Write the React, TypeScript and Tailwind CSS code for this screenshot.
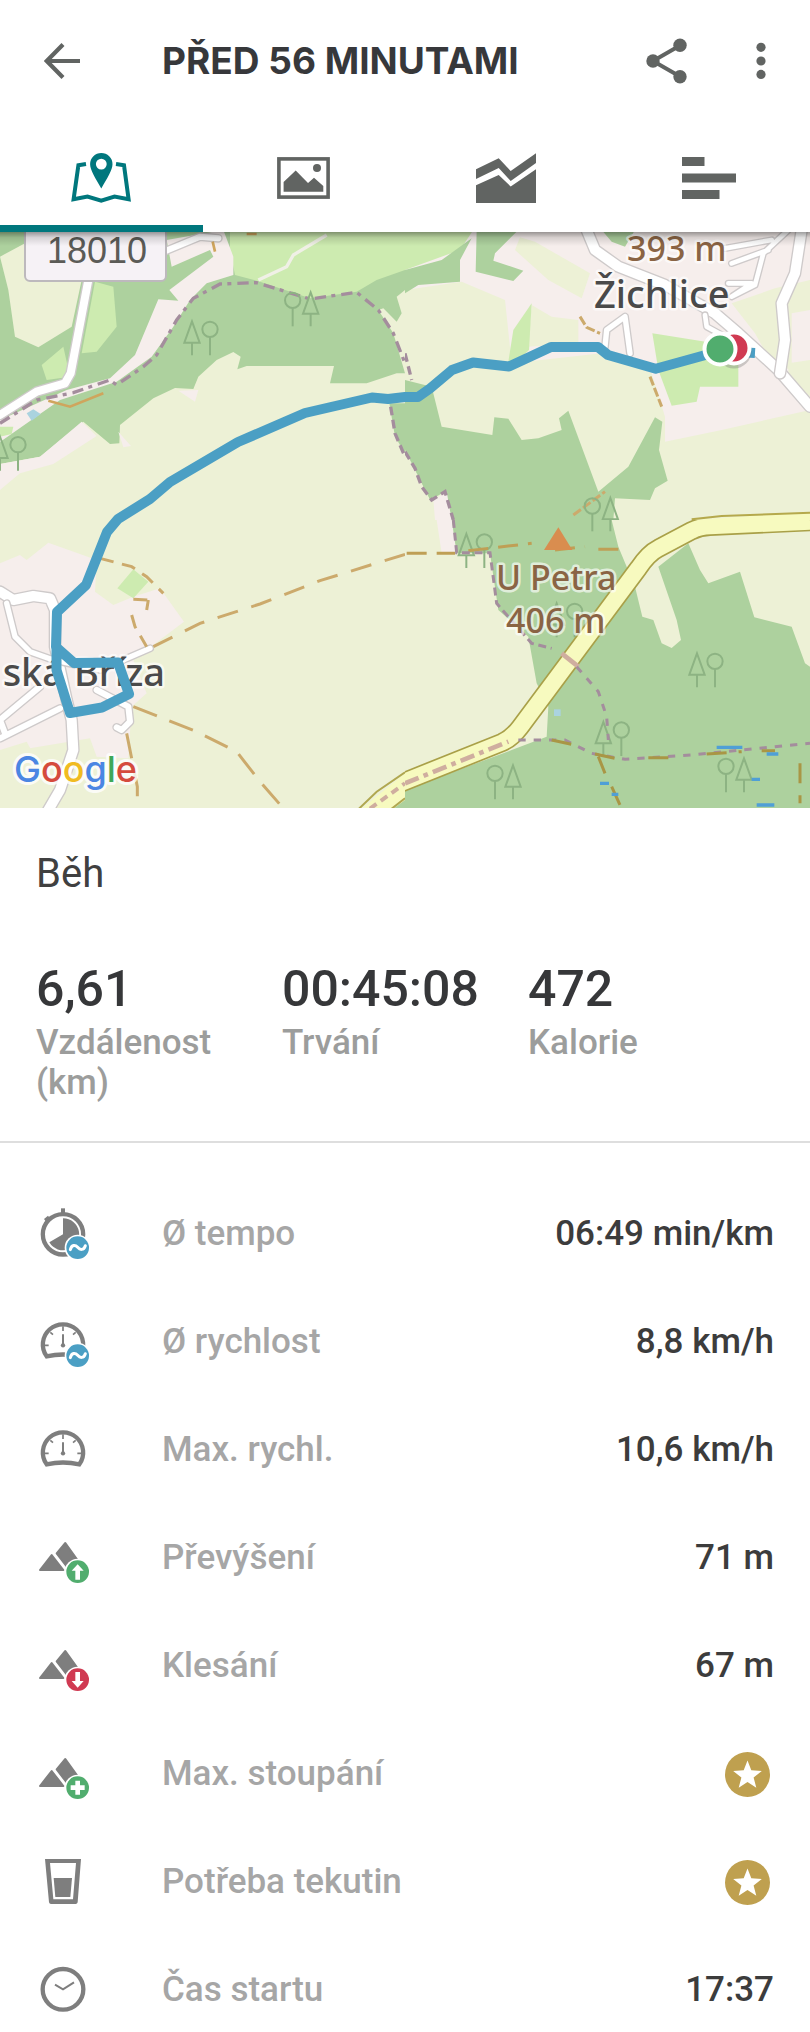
import { useState, type ReactNode } from 'react'

const GRAY = '#7e7e7e'
const BLUE = '#4b9fc4'
const GREEN = '#51ad6e'
const RED = '#d03a52'

const FOREST = '#add19e'
const MEADOW = '#cdebb0'
const FARM = '#edf1d6'
const TOWN = '#f6eeec'
const TRACK = '#ccaa6c'
const BORDER = '#a48d9d'

/* ---------- header and tab icons ---------- */

function BackIcon() {
  return (
    <svg width="36" height="36" viewBox="0 0 36 36" fill="none" stroke="#616462" strokeWidth="4.2">
      <path d="M36 18H3M19 1.5L2.8 18L19 34.5" />
    </svg>
  )
}

function ShareIcon() {
  return (
    <svg width="42" height="46" viewBox="0 0 42 46" fill="#616462">
      <path d="M34 7.5L7 23L34 38.5" fill="none" stroke="#616462" strokeWidth="4" />
      <circle cx="7" cy="23" r="6.7" />
      <circle cx="34" cy="7.2" r="6.7" />
      <circle cx="34" cy="38.7" r="6.7" />
    </svg>
  )
}

function MoreIcon() {
  return (
    <svg width="10" height="38" viewBox="0 0 10 38" fill="#616462">
      <circle cx="5" cy="5.3" r="4.6" />
      <circle cx="5" cy="19" r="4.6" />
      <circle cx="5" cy="32.4" r="4.6" />
    </svg>
  )
}

function MapIcon() {
  return (
    <svg width="60" height="50" viewBox="0 0 60 50">
      <path
        d="M15 11L7.4 12.2L2.6 46.2L16.5 43.6L30.2 47.6L43.5 43.6L57.6 46.2L53 12.2L45 11"
        fill="none"
        stroke="currentColor"
        strokeWidth="4"
      />
      <path
        d="M30.3 0A11.2 11.2 0 0 1 41.5 11.2C41.5 17 36 25.5 30.3 35.5C24.6 25.5 19.1 17 19.1 11.2A11.2 11.2 0 0 1 30.3 0ZM30.3 5.7A5.4 5.4 0 1 0 30.3 16.5A5.4 5.4 0 0 0 30.3 5.7Z"
        fill="currentColor"
        fillRule="evenodd"
      />
    </svg>
  )
}

function PhotoIcon() {
  return (
    <svg width="53" height="42" viewBox="0 0 53 42" fill="currentColor">
      <rect x="1.9" y="1.9" width="49.2" height="38.2" fill="none" stroke="currentColor" strokeWidth="3.6" />
      <path d="M6.6 25L18.7 13.5L31 26L37 20.8L46.3 29V34.8H6.6Z" />
      <circle cx="40" cy="11" r="4" />
    </svg>
  )
}

function ChartIcon() {
  return (
    <svg width="60" height="50" viewBox="0 0 60 50" fill="currentColor">
      <path d="M0 16.3L22.7 5.3L34.7 18L60 0.3V10L34.7 28L22.7 15L0 26Z" />
      <path d="M0 32.3L22.7 22L34.7 33.5L60 16.3V50H0Z" />
    </svg>
  )
}

function SplitsIcon() {
  return (
    <svg width="54" height="42" viewBox="0 0 54 42" fill="currentColor">
      <rect width="22.5" height="9" />
      <rect y="16.5" width="54" height="9" />
      <rect y="33" width="37.5" height="9" />
    </svg>
  )
}

/* ---------- row icons, all on the same 162 unit grid ---------- */

function RowIcon({ children }: { children: ReactNode }) {
  return (
    <svg width="54" height="54" viewBox="0 0 162 162" fill={GRAY} aria-hidden="true">
      {children}
    </svg>
  )
}

function Badge({ color, children }: { color: string; children: ReactNode }) {
  return (
    <>
      <circle cx="125" cy="122" r="39" fill="#fff" />
      <circle cx="125" cy="122" r="34" fill={color} />
      {children}
    </>
  )
}

function AverageBadge() {
  return (
    <Badge color={BLUE}>
      <path
        d="M103 128C107 112 118 113 125 121S143 131 148 116"
        fill="none"
        stroke="#fff"
        strokeWidth="9"
        strokeLinecap="round"
      />
    </Badge>
  )
}

function Gauge() {
  return (
    <g fill="none" stroke={GRAY}>
      <path d="M32 124A60.5 60.5 0 1 1 130 124Q81 113 32 124Z" strokeWidth="13" />
      <path d="M81 34V48M26 91H38M124 91H136M43 52L51 59M119 52L111 59" strokeWidth="5" />
      <path d="M81 60V88" strokeWidth="6" strokeLinecap="round" />
      <circle cx="81" cy="91" r="6.5" fill={GRAY} stroke="none" />
    </g>
  )
}

function Mountains() {
  return (
    <g stroke={GRAY} strokeWidth="6" strokeLinejoin="round">
      <path d="M12 117L47 72L82 117Z" />
      <path d="M88 36L62 67L100 117H146Z" />
    </g>
  )
}

function StopwatchIcon() {
  return (
    <RowIcon>
      <circle cx="81" cy="82" r="60.5" fill="none" stroke={GRAY} strokeWidth="13" />
      <rect x="75" y="4" width="12" height="14" />
      <path d="M24 36L36 26L42 34L30 44Z" />
      <path d="M81 82V34A48 48 0 1 1 40 106Z" />
      <AverageBadge />
    </RowIcon>
  )
}

function AvgSpeedIcon() {
  return (
    <RowIcon>
      <Gauge />
      <AverageBadge />
    </RowIcon>
  )
}

function MaxSpeedIcon() {
  return (
    <RowIcon>
      <Gauge />
    </RowIcon>
  )
}

function AscentIcon() {
  return (
    <RowIcon>
      <Mountains />
      <Badge color={GREEN}>
        <path d="M125 100L143 119H132V146H118V119H107Z" fill="#fff" />
      </Badge>
    </RowIcon>
  )
}

function DescentIcon() {
  return (
    <RowIcon>
      <Mountains />
      <Badge color={RED}>
        <path d="M125 146L143 126H132V99H118V126H107Z" fill="#fff" />
      </Badge>
    </RowIcon>
  )
}

function ClimbIcon() {
  return (
    <RowIcon>
      <Mountains />
      <Badge color={GREEN}>
        <path d="M118 101H132V115H146V129H132V143H118V129H104V115H118Z" fill="#fff" />
      </Badge>
    </RowIcon>
  )
}

function GlassIcon() {
  return (
    <RowIcon>
      <path
        d="M27 12H135L125 142Q124 147 119 147H45Q40 147 39 142ZM42 24L52 133H111L120 24Z"
        fillRule="evenodd"
      />
      <path d="M53 69H108L103 126H58Z" />
    </RowIcon>
  )
}

function ClockIcon() {
  return (
    <RowIcon>
      <circle cx="81" cy="79" r="61" fill="none" stroke={GRAY} strokeWidth="13" />
      <path d="M57 65L81 79L114 58" fill="none" stroke={GRAY} strokeWidth="6" />
    </RowIcon>
  )
}

function PremiumStar() {
  return (
    <svg width="45" height="45" viewBox="0 0 45 45" className="mr-1" role="img" aria-label="Premium">
      <circle cx="22.5" cy="22.5" r="22.5" fill="#bfa04f" />
      <path
        d="M22.5 8.5L26.3 18.3L36.8 18.9L28.6 25.5L31.3 35.7L22.5 29.9L13.7 35.7L16.4 25.5L8.2 18.9L18.7 18.3Z"
        fill="#fff"
      />
    </svg>
  )
}

/* ---------- map ---------- */

function Tree({ x, y, flip = false }: { x: number; y: number; flip?: boolean }) {
  const cone = flip ? 54 : 0
  const ball = flip ? 0 : 54
  return (
    <g transform={`translate(${x} ${y})`} fill="none" stroke="#8db383" strokeWidth="6">
      <path d={`M${cone} -30L${cone - 23} 34H${cone + 23}ZM${cone} 36V72`} />
      <path d={`M${ball} 18V72`} />
      <circle cx={ball} cy="-6" r="23" />
    </g>
  )
}

function Street({ d, width = 20 }: { d: string; width?: number }) {
  return (
    <g fill="none" strokeLinecap="round" strokeLinejoin="round">
      <path d={d} stroke="#cecaca" strokeWidth={width + 8} />
      <path d={d} stroke="#fff" strokeWidth={width} />
    </g>
  )
}

function Dashes({ d, color = TRACK, dash = '42 24', width = 9 }: { d: string; color?: string; dash?: string; width?: number }) {
  return <path d={d} fill="none" stroke={color} strokeWidth={width} strokeDasharray={dash} />
}

function NorthWest() {
  return (
    <svg x="0" y="-2" width="405" height="290" viewBox="0 0 1215 870">
      <rect width="1215" height="870" fill={FARM} />
      <path
        d="M0 0H1215V430L1190 430L1100 460H990L1002 408H740L712 418L722 380L700 366L650 390L595 440L580 477L525 474L460 505L360 585L358 640L330 642L250 575L120 680L0 702Z"
        fill={FOREST}
      />
      <path d="M690 0H1215V120L1130 150L1070 185L930 205L780 155L705 135L690 60Z" fill={MEADOW} />
      <path d="M1190 200L1215 180V430L1180 310L1135 240L1150 235L1190 275L1205 250Z" fill={FARM} />
      <path d="M0 80L75 40L80 150H245L215 290L115 352L45 320L25 180Z" fill={FARM} />
      <path d="M285 155L340 170L350 290L290 365L245 370ZM190 350L210 440L140 450L125 405Z" fill={MEADOW} />
      <path
        d="M500 30L670 0L700 80V135L620 160L570 210L520 290L455 380L350 455L180 510L0 636V570L200 480L330 445L405 375L475 208L535 212L508 180L640 80L630 60L515 110Z"
        fill={TOWN}
      />
      <path
        d="M0 702L120 680L245 575L290 618L160 702L60 730L0 780ZM355 605L393 648L370 652ZM535 482L595 480L585 515Z"
        fill={TOWN}
      />
      <path d="M0 590L40 590L35 612L0 620Z" fill={MEADOW} />
      <path d="M80 550L100 538L122 552L95 572Z" fill="#aad3df" />
      <path d="M775 150L860 110L880 75L980 15" fill="none" stroke="#f0f0e6" strokeWidth="10" />
      <Street d="M0 555L110 485L195 460L212 430L265 150" width={24} />
      <Street d="M480 70L600 20L655 25" width={18} />
      <Dashes
        d="M0 580L110 510L220 488L330 450L350 465L430 410L470 375L530 270L580 205L660 162L770 158L930 207L1070 187L1135 240L1180 310L1215 400"
        color={BORDER}
        dash="34 16 12 18"
        width={10}
      />
      <path d="M1168 520H1215V670L1185 620Z" fill={FOREST} />
      <Dashes d="M1172 530L1185 610L1215 680" color={BORDER} dash="26 14" width={10} />
      <path d="M145 512L210 530L310 490M645 65L638 35M740 12L770 12" fill="none" stroke="#cfa55d" strokeWidth="8" />
      <Tree x={576} y={304} />
      <Tree x={878} y={217} flip />
      <Tree x={0} y={650} />
    </svg>
  )
}

function NorthEast() {
  return (
    <svg x="405" y="-2" width="405" height="290" viewBox="0 0 1215 870">
      <rect width="1215" height="870" fill={TOWN} />
      <path d="M0 180L170 155L300 210L320 400L590 370L740 430L780 560L780 635L950 600L1215 540V870H0Z" fill={FARM} />
      <path d="M0 0H205L165 60L0 120Z" fill={MEADOW} />
      <path d="M0 120L110 90L200 25L165 90V155L40 165L0 190Z" fill={FOREST} />
      <path d="M215 0H340L270 70L265 92L355 122L325 153L212 125ZM590 0H690L660 50L620 35Z" fill={FOREST} />
      <path d="M345 22L390 35L555 130L530 205L430 150L330 60ZM380 225L440 260L520 270V340L370 350Z" fill={FARM} />
      <path d="M980 220L1110 175L1215 150V240L1160 250V420L1100 400L1050 310ZM1150 400L1215 390V500L1150 440Z" fill={FARM} />
      <path d="M310 395L325 300L380 220L372 360L330 400Z" fill={MEADOW} />
      <path d="M742 310L930 340L1000 400V470H885L875 515L800 527L760 420Z" fill={MEADOW} />
      <path
        d="M0 450L80 470L110 590L262 615L268 562L310 566L350 630L400 625L470 600L462 565L490 542L580 785L670 710L750 562L772 575L762 660L788 752L750 775L735 810L630 805L625 870H140L120 785L75 810L0 665Z"
        fill={FOREST}
      />
      <path d="M0 660L75 810L100 870H0Z" fill={FARM} />
      <path d="M85 810L125 785L140 870H90Z" fill={TOWN} />
      <Street d="M545 0L570 60L640 110L780 165L930 250L1000 310L1120 420L1215 530" width={30} />
      <Street d="M1190 0L1170 130L1130 220L1140 330L1125 430" width={30} />
      <Street d="M600 350L605 300L660 260L675 370" width={16} />
      <Street
        d="M900 255L905 290L960 320M970 160H1040L980 200L1050 165L1075 70L1150 0M980 100L1090 60M960 55L1100 30"
        width={14}
      />
      <Dashes d="M525 260L545 292L585 310M735 440L770 530M505 855L600 785" dash="28 8" />
      <Dashes
        d="M0 370L20 450M0 665L30 715L50 770L80 810L120 785L145 870"
        color={BORDER}
        dash="26 14"
        width={10}
      />
      <path d="M860 870L1215 846V870Z" fill="#f7fabf" />
      <path d="M860 868L950 858L1215 848" fill="none" stroke="#b5a94c" strokeWidth="6" />
      <Tree x={562} y={834} flip />
    </svg>
  )
}

function SouthWest() {
  return (
    <svg x="0" y="288" width="405" height="290" viewBox="0 0 1215 870">
      <rect width="1215" height="870" fill={FARM} />
      <path
        d="M0 130L60 105L80 120L145 68L290 120L285 215L340 255L400 230L480 205L552 305L400 420L440 520L395 560L385 715L290 710L270 655L0 700Z"
        fill={TOWN}
      />
      <path d="M0 690L80 665L110 720L0 760Z" fill={FARM} />
      <path d="M400 148L445 185L400 235L352 205Z" fill={MEADOW} />
      <Street d="M0 215L40 240L100 228L150 235L165 270V380L200 540L215 600L220 690L180 810L145 870" width={30} />
      <Street d="M20 250L45 350L90 395L160 420L300 450L450 385" width={16} />
      <Street d="M0 600L120 500M0 655L180 565M0 600L15 640" width={18} />
      <Street d="M290 510L385 560L390 605L365 630L350 622" width={18} />
      <Dashes
        d="M300 115L395 140L440 170L490 220M400 238L445 240M395 285L405 320L440 380M445 240L440 270"
        dash="42 26"
      />
      <Dashes d="M460 380L600 310L780 252L960 182L1215 103" dash="64 42" />
      <Dashes d="M400 560L590 635L710 695L780 785L850 865M380 640L412 800V870" dash="76 40" />
      <path d="M1080 870L1215 760V870Z" fill="#f7fabf" />
      <path d="M1175 870L1215 840V870Z" fill={FOREST} />
      <path d="M1075 868L1130 815L1215 757M1170 870L1215 835" fill="none" stroke="#b0a750" strokeWidth="6" />
      <Dashes d="M1110 866L1215 790" color="#cfae9f" dash="24 16" width={12} />
    </svg>
  )
}

function SouthEast() {
  return (
    <svg x="405" y="288" width="405" height="290" viewBox="0 0 1215 870">
      <rect width="1215" height="870" fill={FARM} />
      <path
        d="M140 0H620L640 80L690 200L712 290L745 300L770 370L800 384L828 360L815 300L760 140L850 70L885 150L910 190L1005 155L1048 292L1160 320L1200 430L1215 440V870H0V810L320 690L425 650L430 560L395 490L370 350L280 270L255 100H150Z"
        fill={FOREST}
      />
      <path d="M95 0H140L155 100H110Z" fill={TOWN} />
      <Tree x={184} y={72} />
      <Tree x={562} y={-38} flip />
      <Tree x={876} y={430} />
      <Tree x={595} y={636} />
      <Tree x={270} y={766} flip />
      <Tree x={963} y={745} flip />
      <Tree x={455} y={280} />
      <Dashes d="M5 100H150M190 92L380 70M450 90L540 80M580 88H640" dash="60 30" color="#bf9f55" />
      <Dashes d="M145 0L155 98H255L275 250L310 290L380 370L440 385" color={BORDER} dash="24 14" width={9} />
      <g fill="none">
        <path
          d="M-20 792L290 668Q320 655 345 622L700 145Q730 100 760 85L860 32Q885 20 915 19L1215 5"
          stroke="#a9a048"
          strokeWidth="58"
        />
        <path
          d="M-20 792L290 668Q320 655 345 622L700 145Q730 100 760 85L860 32Q885 20 915 19L1215 5"
          stroke="#f7fabf"
          strokeWidth="48"
        />
      </g>
      <path d="M470 400L520 440" stroke="#cfae9f" strokeWidth="14" />
      <Dashes d="M0 790L310 665" color="#cfae9f" dash="44 16 14 16" width={14} />
      <Dashes
        d="M515 440L580 515L605 590L610 660M340 660H480L560 700L660 718L860 705L1215 670"
        color={BORDER}
        dash="22 24"
        width={9}
      />
      <Dashes
        d="M440 660L510 675M570 702L630 715M580 710L600 760M620 800L645 855M730 713H800M905 702L1010 695M1070 692H1110M1185 730V850"
        color="#a99645"
        dash="60 36"
      />
      <path
        d="M935 682H1012M1085 702H1120M585 790H612M620 823H640M1040 778H1065M1055 855H1108"
        stroke="#4f9fd6"
        strokeWidth="10"
      />
      <rect x="447" y="568" width="20" height="20" fill="#aad3df" />
      <path d="M460 22L502 90H417Z" fill="#d98d4f" />
    </svg>
  )
}

function RouteMap() {
  return (
    <svg viewBox="0 0 810 576" className="block w-full" role="img" aria-label="Mapa">
      <defs>
        <linearGradient id="headerShade" x1="0" y1="0" x2="0" y2="1">
          <stop offset="0" stopColor="#000" stopOpacity="0.38" />
          <stop offset="0.4" stopColor="#000" stopOpacity="0.13" />
          <stop offset="1" stopColor="#000" stopOpacity="0" />
        </linearGradient>
      </defs>
      <NorthWest />
      <NorthEast />
      <SouthWest />
      <SouthEast />

      <rect x="25" y="-10" width="141" height="59" rx="5" fill="#f6f2f6" stroke="#bdb9bd" strokeWidth="2" />
      <text x="47" y="31" fontSize="36" className="font-['Liberation_Sans',sans-serif]" fill="#5b5b56">
        18010
      </text>
      <g
        className="font-['Noto_Sans',sans-serif] font-medium"
        stroke="#fff"
        strokeOpacity="0.65"
        strokeWidth="5"
        strokeLinejoin="round"
        paintOrder="stroke"
      >
        <g fontSize="34" fill="#8a6444">
          <text x="627" y="29">393 m</text>
          <text x="496" y="358">U Petra</text>
          <text x="506" y="401">406 m</text>
        </g>
        <g fontSize="38" fill="#4a4a4a">
          <text x="594" y="76">Žichlice</text>
          <text x="165" y="454" textAnchor="end">
            ská Bříza
          </text>
        </g>
      </g>

      <path
        d="M755 121L720 119L655.7 136.7L608 123L598 115H551L509 134.5L473 130.5L452 138L430 156.5L418 165H405L388 167L372 165.5L305 181L238 210L170 250L150 267L118 287L107 300L86 353L57 380L56 415L74 431L118 430.5L129 462L102 475.5L70 481L56.5 438V415"
        fill="none"
        stroke={BLUE}
        strokeWidth="10"
        strokeLinejoin="round"
      />
      <circle cx="734" cy="119" r="17.5" fill="#777" opacity="0.35" />
      <circle cx="734" cy="116" r="15.5" fill={RED} stroke="#fff" strokeWidth="4" />
      <circle cx="720" cy="117" r="15.5" fill={GREEN} stroke="#fff" strokeWidth="4" />

      <text
        x="14"
        y="550"
        fontSize="36"
        className="font-['Inter',sans-serif] font-medium"
        stroke="#fff"
        strokeOpacity="0.8"
        strokeWidth="6"
        strokeLinejoin="round"
        paintOrder="stroke"
      >
        <tspan fill="#4b86e3">G</tspan>
        <tspan fill="#d54b3d">o</tspan>
        <tspan fill="#f0bb22">o</tspan>
        <tspan fill="#4b86e3">g</tspan>
        <tspan fill="#3fa757">l</tspan>
        <tspan fill="#d54b3d">e</tspan>
      </text>
      <rect width="810" height="14" fill="url(#headerShade)" />
    </svg>
  )
}

/* ---------- page ---------- */

const tabs = [
  { label: 'Mapa', icon: <MapIcon /> },
  { label: 'Fotky', icon: <PhotoIcon /> },
  { label: 'Grafy', icon: <ChartIcon /> },
  { label: 'Mezičasy', icon: <SplitsIcon /> },
]

const stats = [
  { value: '6,61', label: 'Vzdálenost (km)' },
  { value: '00:45:08', label: 'Trvání' },
  { value: '472', label: 'Kalorie' },
]

const details = [
  { label: 'Ø tempo', icon: <StopwatchIcon />, value: '06:49 min/km' },
  { label: 'Ø rychlost', icon: <AvgSpeedIcon />, value: '8,8 km/h' },
  { label: 'Max. rychl.', icon: <MaxSpeedIcon />, value: '10,6 km/h' },
  { label: 'Převýšení', icon: <AscentIcon />, value: '71 m' },
  { label: 'Klesání', icon: <DescentIcon />, value: '67 m' },
  { label: 'Max. stoupání', icon: <ClimbIcon />, value: <PremiumStar /> },
  { label: 'Potřeba tekutin', icon: <GlassIcon />, value: <PremiumStar /> },
  { label: 'Čas startu', icon: <ClockIcon />, value: '17:37' },
]

export default function App() {
  const [active, setActive] = useState(0)

  return (
    <div className="min-h-screen bg-white font-['Roboto',sans-serif]">
      <header className="flex h-[122px] items-center pr-11 pl-11">
        <button aria-label="Zpět" className="w-[118px]">
          <BackIcon />
        </button>
        <h1 className="flex-1 font-['Inter',sans-serif] text-[37px] font-bold text-[#37383b]">
          PŘED 56 MINUTAMI
        </h1>
        <div className="flex items-center gap-[68px]">
          <button aria-label="Sdílet">
            <ShareIcon />
          </button>
          <button aria-label="Další možnosti">
            <MoreIcon />
          </button>
        </div>
      </header>

      <div role="tablist" className="grid h-[110px] grid-cols-4">
        {tabs.map((tab, i) => (
          <button
            key={tab.label}
            role="tab"
            aria-label={tab.label}
            aria-selected={i === active}
            onClick={() => setActive(i)}
            className={
              i === active
                ? 'flex items-center justify-center border-b-[7px] border-[#00777d] pt-2 text-[#00777d]'
                : 'flex items-center justify-center border-b-[7px] border-transparent pt-2 text-[#616462]'
            }
          >
            {tab.icon}
          </button>
        ))}
      </div>

      <RouteMap />

      <section className="border-b-2 border-[#dedede] px-9 pt-[42px] pb-[38px]">
        <h2 className="text-[40px] leading-12 text-[#404040]">Běh</h2>
        <dl className="mt-[61px] grid grid-cols-3">
          {stats.map((s) => (
            <div key={s.label} className="flex flex-col-reverse justify-end">
              <dt className="pr-10 text-[35px] leading-10 font-medium text-[#9c9d9c]">{s.label}</dt>
              <dd className="mb-1 text-[50px] leading-15 font-medium text-[#363739]">{s.value}</dd>
            </div>
          ))}
        </dl>
      </section>

      <dl className="flex flex-col gap-[54px] px-9 pt-16 pb-3 text-[35px] font-medium">
        {details.map((d) => (
          <div key={d.label} className="flex h-[54px] items-center">
            <dt className="flex flex-1 items-center text-[#a6a6a6]">
              <span className="w-[126px]">{d.icon}</span>
              {d.label}
            </dt>
            <dd className="text-[#3c3c3c]">{d.value}</dd>
          </div>
        ))}
      </dl>
    </div>
  )
}
